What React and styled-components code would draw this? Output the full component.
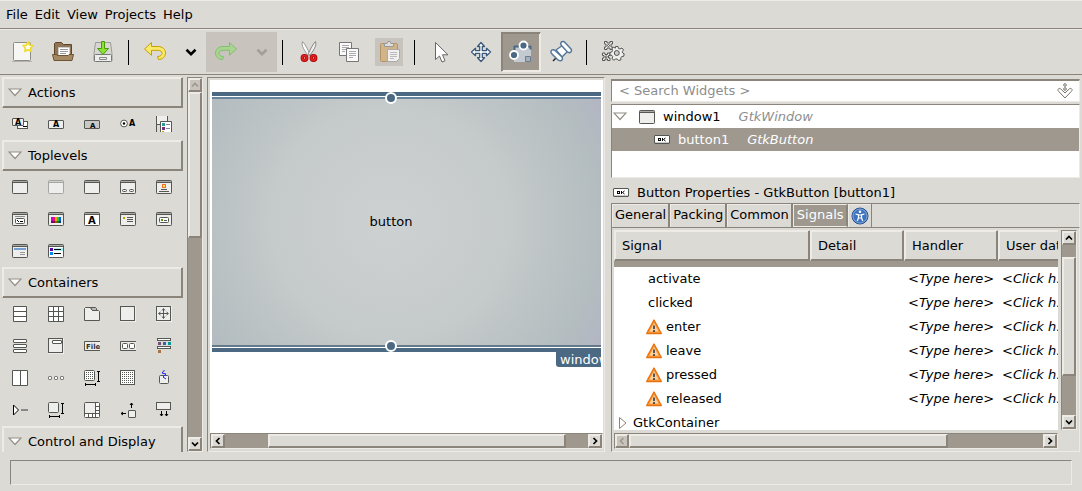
import React from 'react';
import styled, { createGlobalStyle, css } from 'styled-components';

const c = {
  bg: '#dcdad5',
  dark: '#8a847a',
  light: '#eeebe7',
  trough: '#9e988f',
  off: '#c8c4bd',
  blue: '#4b6983',
};

const sunken = css`
  border: 1px solid;
  border-color: ${c.dark} ${c.light} ${c.light} ${c.dark};
`;
const raised = css`
  border: 1px solid;
  border-color: ${c.light} ${c.dark} ${c.dark} ${c.light};
  box-shadow: inset -1px -1px 0 ${c.dark}, inset 1px 1px 0 ${c.light};
`;

const Global = createGlobalStyle`
  *, *::before, *::after { box-sizing: border-box; }
  body { margin: 0; background: ${c.bg}; }
  body, button, input { font: 13px/16px "DejaVu Sans", sans-serif; color: #000; }
  button { padding: 0; border: 0; background: none; text-align: left; }
  svg { display: block; flex: none; }
`;

const Shell = styled.div`
  display: flex;
  flex-direction: column;
  height: 100vh;
  overflow: hidden;
`;
const MenuBar = styled.nav`
  display: flex;
  flex: none;
  gap: 7px;
  height: 29px;
  padding: 0 6px;
  border-top: 1px solid ${c.light};
  border-bottom: 1px solid ${c.dark};
`;
const MenuItem = styled.button`
  height: 27px;
`;
const Toolbar = styled.div`
  display: flex;
  flex: none;
  align-items: center;
  height: 46px;
  padding: 0 3px;
  border-top: 1px solid ${c.light};
  border-bottom: 1px solid ${c.dark};
`;
const Tool = styled.button`
  display: flex;
  align-items: center;
  justify-content: center;
  width: ${(p) => (p.$narrow ? 31 : 40)}px;
  height: 40px;
  background: ${(p) => (p.$active ? c.trough : p.disabled && !p.$inset ? c.off : 'transparent')};
  ${(p) => p.$active && css`
    ${sunken}
    box-shadow: inset 1px 1px 0 ${c.dark}, inset -1px -1px 0 ${c.light};
  `}
`;
const InsetShade = styled.span`
  display: flex;
  padding: 2px;
  background: ${c.off};
`;
const Separator = styled.span`
  width: 1px;
  height: 25px;
  margin: 0 6px 0 5px;
  background: #000;
`;
const Main = styled.main`
  display: flex;
  flex: 1;
  min-height: 0;
  padding: 2px 2px 0;
`;

const PaletteArea = styled.aside`
  display: flex;
  flex: none;
  gap: 4px;
  width: 201px;
  margin-right: 4px;
`;
const Palette = styled.div`
  flex: 1;
  overflow: hidden;
`;
const GroupHeader = styled.button`
  display: flex;
  align-items: center;
  gap: 6px;
  width: 100%;
  height: 31px;
  padding: 0 5px;
  ${raised}
`;
const IconGrid = styled.div`
  display: grid;
  grid-template-columns: repeat(5, 36px);
  grid-auto-rows: 32px;
`;
const PaletteItem = styled.button`
  display: flex;
  align-items: center;
  justify-content: center;
`;

const Bar = styled.div`
  display: flex;
  flex: none;
  flex-direction: ${(p) => (p.$vertical ? 'column' : 'row')};
  ${(p) => (p.$vertical ? 'width' : 'height')}: 16px;
  background: ${c.trough};
  ${sunken}
`;
const Arrow = styled.button`
  display: flex;
  flex: none;
  align-items: center;
  justify-content: center;
  width: 14px;
  height: 14px;
  background: ${(p) => (p.disabled ? c.off : c.bg)};
  ${raised}
`;
const Before = styled.span`
  flex: ${(p) => p.$part} 1 0;
`;
const Thumb = styled.span`
  flex: ${(p) => p.$part} 1 0;
  background: ${c.bg};
  ${raised}
`;

const Designer = styled.section`
  display: flex;
  flex-direction: column;
  flex: 398 1 398px;
  min-width: 0;
  margin-right: 6px;
  padding: 2px 1px 2px 2px;
  ${sunken}
`;
const Canvas = styled.div`
  flex: 1;
  min-height: 0;
  padding: 12px 2px;
  background: #fff;
`;
const Clip = styled.div`
  position: relative;
  height: 100%;
  overflow: hidden;
`;
const DesignWindow = styled.div`
  position: relative;
  padding: 1px 0;
  border: solid ${c.blue};
  border-width: 4px 0;
`;
const DesignButton = styled.button`
  display: block;
  width: 100%;
  height: 250px;
  border-top: 2px solid #68839c;
  border-bottom: 2px solid #64798a;
  background: radial-gradient(ellipse 68% 104% at 46% 50%, #cdd1d1 0%, #c5caca 45%, #b4bdc0 78%, #b2b6c2 92%);
  text-align: center;
  padding-right: 31px;
`;
const Handle = styled.span`
  position: absolute;
  left: 46%;
  ${(p) => p.$edge}: -4px;
  width: 12px;
  height: 12px;
  margin-left: -6px;
  border: 2px solid #fff;
  border-radius: 50%;
  background: ${c.blue};
`;
const WindowTag = styled.span`
  display: block;
  width: 60px;
  height: 15px;
  margin: 0 -15px 0 auto;
  padding-left: 4px;
  border-radius: 0 0 0 3px;
  background: ${c.blue};
  color: #fff;
`;

const Inspector = styled.section`
  display: flex;
  flex-direction: column;
  flex: 469 1 469px;
  min-width: 0;
`;
const SearchBox = styled.label`
  display: flex;
  flex: none;
  align-items: center;
  height: 23px;
  margin: 2px 0;
  padding: 0 6px 0 7px;
  background: #fff;
  ${sunken}
  border-top-width: 2px;
`;
const SearchInput = styled.input`
  flex: 1;
  min-width: 0;
  padding: 0;
  border: 0;
  outline: 0;
  background: none;
  &::placeholder { color: #8e8e8e; opacity: 1; }
`;
const Tree = styled.div`
  flex: none;
  height: 74px;
  background: #fff;
  ${sunken}
`;
const TreeRow = styled.div`
  display: flex;
  align-items: center;
  gap: 8px;
  height: 23px;
  padding-left: ${(p) => (p.$selected ? 42 : 1)}px;
  background: ${(p) => (p.$selected ? c.trough : 'none')};
  color: ${(p) => (p.$selected ? '#fff' : '#000')};
`;
const ClassName = styled.em`
  margin-left: 10px;
  color: ${(p) => (p.$selected ? '#fff' : '#8e8e8e')};
`;
const TreeToggle = styled.button`
  margin-right: 4px;
`;
const Title = styled.h2`
  display: flex;
  flex: none;
  align-items: center;
  gap: 8px;
  height: 25px;
  margin: 0;
  padding: 4px 2px 0;
  font: inherit;
`;
const Tabs = styled.div`
  display: flex;
  flex: none;
  height: 25px;
  border: 1px solid ${c.dark};
  border-right-color: ${c.light};
`;
const Tab = styled.button`
  height: 23px;
  padding: 0 2px 2px 3px;
  border-right: 2px solid ${c.dark};
  box-shadow: inset 0 1px 0 ${c.light}, inset 1px 0 0 ${c.light};
  ${(p) => p.$icon && css`
    padding-bottom: 0;
    border-right-width: 1px;
  `}
  ${(p) => p.$selected && css`
    border: 1px solid ${c.light};
    border-right: 2px solid ${c.dark};
    background: ${c.trough};
    color: #fff;
    box-shadow: none;
  `}
`;
const Page = styled.div`
  display: grid;
  flex: 1;
  grid-template: minmax(0, 1fr) 16px / minmax(0, 1fr) 16px;
  gap: 3px;
  min-height: 0;
  padding: 2px;
  ${sunken}
  border-top: 0;
`;
const TableClip = styled.div`
  overflow: hidden;
  background: #fff;
`;
const Table = styled.table`
  width: 100%;
  min-width: 478px;
  table-layout: fixed;
  border-collapse: separate;
  border-spacing: 0;
`;
const Head = styled.th`
  width: ${(p) => p.$w || 'auto'};
  height: 31px;
  padding: 0 7px;
  background: ${c.bg};
  font-weight: normal;
  text-align: left;
  ${raised}
`;
const PartialCell = styled.td`
  height: 6px;
  padding: 0;
  background: ${c.trough};
`;
const Cell = styled.td`
  height: 24px;
  padding: 0 0 0 4px;
  overflow: hidden;
  white-space: nowrap;
  font-style: ${(p) => (p.$hint ? 'italic' : 'normal')};
`;
const Signal = styled.span`
  display: flex;
  align-items: center;
  gap: 4px;
  padding-left: ${(p) => (p.$top ? 0 : p.$warn ? 28 : 30)}px;
`;
const Status = styled.footer`
  flex: none;
  height: 25px;
  margin: 8px 10px 6px;
  ${sunken}
`;

const Down = () => (
  <svg width="14" height="9" viewBox="0 0 14 9"><path d="M1 1h12L7 7.5z" fill="#fff" stroke="#968f86" strokeWidth="1.2" /></svg>
);
const chevrons = {
  up: 'M1 5.5 4 2.5l3 3', down: 'M1 2.5l3 3 3-3', left: 'M5.5 1l-3 3 3 3', right: 'M2.5 1l3 3-3 3',
};
const Chevron = ({ dir, color = '#000', size = 8 }) => (
  <svg width={size} height={size} viewBox="0 0 8 8"><path d={chevrons[dir]} fill="none" stroke={color} strokeWidth="1.7" /></svg>
);

function Scrollbar({ vertical, before, thumb, startOff }) {
  return (
    <Bar $vertical={vertical}>
      <Arrow disabled={startOff} aria-label="Scroll back"><Chevron dir={vertical ? 'up' : 'left'} color={startOff ? c.trough : '#000'} /></Arrow>
      <Before $part={before} />
      <Thumb $part={thumb} />
      <Before $part={100 - before - thumb} />
      <Arrow aria-label="Scroll forward"><Chevron dir={vertical ? 'down' : 'right'} /></Arrow>
    </Bar>
  );
}

/* 16px palette icons */
const S = ({ children, ...rest }) => (
  <svg width="16" height="16" viewBox="0 0 16 16" fill="none" stroke="#555753" {...rest}>{children}</svg>
);
const Win = ({ children, fill = '#eeeeec', faint }) => (
  <S stroke={faint ? '#a5a5a2' : '#555753'}>
    <rect x=".5" y="1.5" width="15" height="13" rx=".8" fill={fill} />
    <path d="M1 2.5h14" stroke={faint ? '#d0d0ce' : '#a9a9a6'} />
    <path d="M1 3.5h14" />
    {children}
  </S>
);
const Letter = ({ x, y, size = 8 }) => (
  <text x={x} y={y} fontSize={size} fontFamily="DejaVu Sans, sans-serif" fontWeight="bold" fill="#000" stroke="none">A</text>
);
const OkIcon = () => (
  <S><rect x=".5" y="3.5" width="15" height="8" rx=".5" fill="#fff" /><path d="M1 10.5h14" stroke="#ccc" />
    <rect x="4.500" y="6.500" width="2" height="2" stroke="#000" /><path d="M8.500 6v3M11.500 6l-2 1.500 2 1.500" stroke="#000" /></S>
);

const groups = [
  ['Actions', [
    ['Action group', <S><rect x="5.5" y="5.5" width="10" height="7" fill="#fff" /><path d="M11 10.500h4" stroke="#000" /><rect x=".5" y="2.500" width="11" height="7" rx=".5" fill="#eeeeec" /><Letter x="3" y="9" /></S>],
    ['Action', <S><rect x=".5" y="4.500" width="15" height="8" rx=".5" fill="#eeeeec" /><Letter x="5" y="11" /></S>],
    ['Toggle action', <S><rect x=".5" y="4.500" width="15" height="8" rx=".5" fill="#c8c8c6" /><Letter x="6" y="12" size={7} /></S>],
    ['Radio action', <S><circle cx="4" cy="7.500" r="3.400" fill="#fff" /><circle cx="4" cy="7.500" r="1.200" fill="#000" stroke="none" /><Letter x="9" y="10" /></S>],
    ['Recent action', <S><path d="M1 0h11v8H1z" fill="#eeeeec" stroke="none" /><path d="M.5 0v16M11.500 0v5M1 8.500h4" /><path d="M4.500 16V5.500h11V16" fill="#fff" /><path d="M10 8.500h4M10 12.500h4" stroke="#888" /><path d="M6 8.500h3" stroke="#2a9a9a" strokeWidth="3" /><path d="M6 12.500h3" stroke="#75307b" strokeWidth="3" /><path d="M6 15.500h2" stroke="#c4a000" /></S>],
  ]],
  ['Toplevels', [
    ['Window', <Win />],
    ['Offscreen window', <Win faint />],
    ['Application window', <Win />],
    ['Dialog', <Win><rect x="2.500" y="10.500" width="4" height="2" rx="1" /><rect x="9.500" y="10.500" width="4" height="2" rx="1" /></Win>],
    ['About dialog', <Win><rect x="6.500" y="5.500" width="3" height="3" fill="#fce94f" stroke="#f0702a" /><path d="M5 10.500h6M3 12.500h10" /></Win>],
    ['File chooser dialog', <Win><path d="M3 5.500h10" stroke="#888" /><rect x="3.500" y="7.500" width="9" height="5" rx="1" fill="#fff" /><path d="M5 9.500h1M6 10.500h1M8 10.500h3" stroke="#000" /></Win>],
    ['Color dialog', <Win><path d="M3 9h2" stroke="#c0c" strokeWidth="6" /><path d="M5 9h2" stroke="#e15" strokeWidth="6" /><path d="M7 9h2" stroke="#da0" strokeWidth="6" /><path d="M9 9h2" stroke="#1c5" strokeWidth="6" /><path d="M11 9h2" stroke="#15e" strokeWidth="6" /><path d="M3 11h10" stroke="#000" strokeOpacity=".4" strokeWidth="2" /></Win>],
    ['Font dialog', <Win fill="#fff"><Letter x="4" y="13" size={10} /></Win>],
    ['Message dialog', <Win><path d="M3 7h2" stroke="#c4a000" strokeWidth="2" /><path d="M7 6.500h6M7 8.500h6M7 10.500h6" /></Win>],
    ['Recent dialog', <Win><rect x="3.500" y="6.500" width="9" height="5" rx="1" fill="#fff" /><path d="M5 9h2" stroke="#4e9a06" strokeWidth="2" /><path d="M8 9.500h3" /></Win>],
    ['Assistant', <Win><path d="M2 6h12" stroke="#729fcf" strokeWidth="2" /><path d="M8 9.500h5M8 11.500h5" stroke="#999" /></Win>],
    ['Color selection', <Win fill="#fff"><path d="M6 6.500h9" stroke="#9ee" strokeWidth="2.500" /><path d="M6 6.500h7M6 10.500h7" stroke="#000" /><path d="M2 6.500h3" stroke="#50a" strokeWidth="3" /><path d="M2 10.500h3" stroke="#08e" strokeWidth="3" /></Win>],
  ]],
  ['Containers', [
    ['Box', <S><path d="M1.500.5h13v15h-13zM1.500 5.500h13M1.500 10.500h13" fill="#fff" /></S>],
    ['Grid', <S><path d="M.5.5h15v15H.5zM.5 5.500h15M.5 10.500h15M5.500.5v15M10.500.5v15" fill="#fff" /></S>],
    ['Notebook', <S><path d="M.5 2.500l1-1h5l2 3h6l1 1v9H.5z" fill="#eeeeec" /><path d="M6.500 1.500h5l1 1v2h-4z" fill="#bbb" /></S>],
    ['Frame', <S><rect x="1" y="1" width="15" height="15" stroke="#fff" /><rect x=".5" y=".5" width="14" height="14" fill="#eeeeec" /></S>],
    ['Aspect frame', <S><rect x="1" y="1" width="15" height="15" stroke="#fff" /><rect x=".5" y=".5" width="14" height="14" fill="#eeeeec" /><path d="M7.500 3v9M3 7.500h9M6 4.500l1.500-2 1.500 2M6 10.500l1.500 2 1.500-2M4.500 6l-2 1.500 2 1.500M10.500 6l2 1.500-2 1.500" /></S>],
    ['Menu bar', <S fill="#fff"><rect x="1.500" y="1.500" width="13" height="3" rx=".5" /><rect x="1.500" y="6.500" width="13" height="3" rx=".5" /><rect x="1.500" y="11.500" width="13" height="3" rx=".5" /></S>],
    ['Expander', <S><rect x="1" y="1" width="15" height="15" stroke="#fff" /><rect x=".5" y=".5" width="14" height="14" fill="#eeeeec" /><rect x="4.500" y="2.500" width="9" height="3" rx=".5" fill="#fff" /></S>],
    ['File menu', <S><path d="M16 3.500H.5v9H16" fill="#eeeeec" /><text x="2" y="10.500" fontSize="7" fontFamily="DejaVu Sans, sans-serif" fontWeight="bold" fill="#333" stroke="none">File</text></S>],
    ['Toolbar', <S><path d="M16 3.500H.5v9H16" fill="#eeeeec" /><rect x="2.500" y="5.500" width="5" height="5" rx="1" fill="#fff" /><rect x="9.500" y="5.500" width="5" height="5" rx="1" fill="#fff" /></S>],
    ['Tool palette', <S><rect x="1.500" y=".5" width="13" height="2" fill="#fff" /><rect x="1.500" y="8.500" width="13" height="2" fill="#fff" /><path d="M2 5.500h3" stroke="#75507b" strokeWidth="3" /><path d="M7 5.500h3" stroke="#3465a4" strokeWidth="3" /><path d="M12 5.500h3" stroke="#099" strokeWidth="3" /><path d="M2 13.500h3" stroke="#a87244" strokeWidth="3" /></S>],
    ['Paned', <S><path d="M.5.5h15v15H.5zM8.500.5v15" fill="#fff" /></S>],
    ['Button box', <S fill="#fff"><rect x=".5" y="6.500" width="3" height="3" rx="1" /><rect x="6.500" y="6.500" width="3" height="3" rx="1" /><rect x="12.500" y="6.500" width="3" height="3" rx="1" /></S>],
    ['Layout', <S><rect x=".5" y=".5" width="10" height="10" rx="1" fill="#fff" /><path d="M2 2.500h8M2 4.500h8M2 6.500h8M2 8.500h8" strokeDasharray="1 1" /><path d="M14.500 1v11M13 1.500h3M13 11.500h3M1 14.500h11M1.500 13v3M11.500 13v3" stroke="#000" /></S>],
    ['Fixed', <S><rect x=".5" y=".5" width="14" height="14" fill="#fff" /><path d="M2 2.500h12M2 4.500h12M2 6.500h12M2 8.500h12M2 10.500h12M2 12.500h12" strokeDasharray="1 1" /></S>],
    ['Event box', <S><rect x="3.500" y="5.500" width="9" height="8" rx="1" fill="#eeeeec" /><path d="M8.500 0L6 3l4 1-3 3 3 2" stroke="#22f" /></S>],
    ['Expander row', <S><path d="M1.500 3v10l5-5z" fill="#fff" stroke="#000" /><path d="M9 8h7" stroke="#888" strokeWidth="2" /></S>],
    ['Viewport', <S><rect x=".5" y=".5" width="10" height="10" rx="1" fill="#eeeeec" /><path d="M14.500 1v11M13 1.500h3M13 11.500h3M1 14.500h11M1.500 13v3M11.500 13v3" stroke="#000" /></S>],
    ['Scrolled window', <S><rect x=".5" y=".5" width="15" height="15" rx="1" fill="#fff" /><path d="M1 1h10v10H1z" fill="#eeeeec" stroke="none" /><path d="M11.500 1v14M1 11.500h14M12 4.500h3M12 8.500h3M4.500 12v3M8.500 12v3" /></S>],
    ['Alignment', <S><rect x="8.500" y="8.500" width="7" height="7" rx=".5" fill="#eeeeec" /><path d="M11.500 6V1M10 3l1.500-2 1.500 2M6 11.500H1M3 10l-2 1.500L3 13" stroke="#000" /></S>],
    ['Popover', <S><rect x=".5" y=".5" width="14" height="7" fill="#eeeeec" /><path d="M5.500 9v5M10.500 9v5M4 12l1.500 2L7 12M9 12l1.500 2 1.500-2" stroke="#000" /></S>],
  ]],
  ['Control and Display', []],
];

/* 24px toolbar icons */
const T = ({ children, ...rest }) => (
  <svg width="24" height="24" viewBox="0 0 24 24" fill="none" strokeLinejoin="round" {...rest}>{children}</svg>
);
const NewIcon = () => (
  <T><path d="M1 21.500h20" stroke="#b5b2ac" /><rect x="2.500" y="2.500" width="17" height="18" rx="1" fill="#f6f6f5" stroke="#8c8d89" />
    <path d="M17 2l1.600 3 3.300.5-2.300 2.500.4 3.300-3-1.500-3 1.500.4-3.300-2.300-2.500 3.300-.5z" fill="#fffef0" stroke="#f0dc28" strokeWidth="1.700" /></T>
);
const OpenIcon = () => (
  <T><path d="M3.500 17V3.500l1-1h6l2 2h8V17z" fill="#8f7455" stroke="#5d4526" /><path d="M7.500 7.500h11v8h-11z" fill="#fff" stroke="#ccc" /><path d="M9 9.500h8M9 11.500h8M9 13.500h6" stroke="#999" />
    <path d="M1.500 14.500H5l2 1h10l1-1h4.500l-1.500 6h-18z" fill="#a48963" stroke="#6d5536" /></T>
);
const SaveIcon = () => (
  <T><path d="M4.500 2.500h15l1.500 11v7.500H3v-7.500z" fill="#d6d7d3" stroke="#9a9c97" /><rect x="3.500" y="14.500" width="17" height="7" rx="1" fill="#eeeeec" stroke="#777" /><path d="M8.500 17.500h7v2h-7z" stroke="#888" />
    <path d="M10.500 1.500h3v7h4L12 14.500l-5.500-6h4z" fill="#8ae234" stroke="#4e9a06" /></T>
);
const Undo = ({ redo }) => (
  <T><g transform={redo ? 'translate(24) scale(-1 1)' : undefined}><path d="M1.500 9l7-6.500v4h6.500c4.300 0 7.500 2.700 7.500 6.500s-3.200 6.500-7 6.500l-1-3c3 0 4.500-1.500 4.500-3.200 0-1.800-1.500-3-4-3h-6.500v5z" fill={redo ? '#a8d490' : '#fbe96a'} stroke={redo ? '#84be74' : '#c4a000'} /></g></T>
);
const Cut = () => (
  <T><path d="M5.500 1.500c-1.500 4 2 9.500 6 14l1-2C10.500 9 8.500 4.500 5.500 1.500z" fill="#fff" stroke="#999" /><path d="M18.500 1.500c1.500 4-2 9.500-6 14l-1-2c2-4.500 4-9 7-12z" fill="#eee" stroke="#888" />
    <g stroke="#a40000" strokeWidth="3.200"><circle cx="7.500" cy="18" r="2.300" /><circle cx="16.500" cy="18" r="2.300" /></g>
    <g stroke="#e02020" strokeWidth="1.800"><circle cx="7.500" cy="18" r="2.300" /><circle cx="16.500" cy="18" r="2.300" /></g></T>
);
const Copy = () => (
  <T><rect x="2.500" y="2.500" width="12" height="13" fill="#fafafa" stroke="#777" /><path d="M5 5.500h7M5 7.500h7M5 9.500h7M5 11.500h3" stroke="#aaa" />
    <rect x="9.500" y="8.500" width="12" height="13" fill="#fafafa" stroke="#777" /><path d="M12 11.500h7M12 13.500h7M12 15.500h7M12 17.500h4" stroke="#aaa" /></T>
);
const Paste = () => (
  <T><rect x="3.500" y="3.500" width="17" height="18" rx="1" fill="#d2b48a" stroke="#b39467" /><path d="M7.500 6.500v-3h2.500l1-2h2l1 2h2.500v3z" fill="#ddd" stroke="#999" />
    <path d="M10.500 9.500h12v9l-3 3h-9z" fill="#f0f0ee" stroke="#aaa" /><path d="M13 12.500h7M13 14.500h7M13 16.500h7M13 18.500h4" stroke="#bbb" /></T>
);
const Pointer = () => (
  <T><path d="M6.500 2.500v17l4-3.500 2.500 6 3-1.200-2.500-6h5.500z" fill="#fff" stroke="#666" /></T>
);
const Move = () => (
  <T><path d="M12 2.500l3.500 4h-2.200v4.200h4.200V8.300l4 3.700-4 3.700v-2.400h-4.200v4.400h2.200L12 21.500l-3.500-3.800h2.200v-4.400H6.500v2.400l-4-3.700 4-3.700v2.400h4.200V6.500H8.500z" fill="#fff" stroke="#3a5a7c" strokeWidth="1.300" /></T>
);
const Drag = () => (
  <T><path d="M5 6h17v16H5z" fill="#c4cad2" /><path d="M5.500 10V6.500H10M19 6.500h2.500v3" stroke="#4b6983" strokeWidth="2" /><path d="M16.500 16.500h5v5h-5z" fill="#a7b0ba" stroke="#6b7d90" />
    <g fill={c.blue} stroke="#fff" strokeWidth="1.800"><circle cx="14.500" cy="5.500" r="4" /><circle cx="5" cy="15" r="4" /></g></T>
);
const Pin = () => (
  <T><path d="M4 21l5-5" stroke="#222" strokeWidth="1.500" /><g fill="#fff" stroke="#56789b" strokeWidth="1.500"><path d="M7 10l7-5 5 6-6 6z" /><path d="M12 2.500c1-1.500 3-1 4 0l6 6.500c1 1.500.5 3-1 3.500s-2 0-3-1l-5.500-6c-1-1-1.200-2-.5-3z" /><path d="M2 11c.8-1.500 3-1.500 4-.5l6.500 6c1.500 1.300 1 3.500-.3 4-1.500.5-2.700 0-3.700-1L3 14c-1-1-1.300-2-1-3z" /></g></T>
);
const Gears = () => (
  <T><g stroke="#555753" fill="#f0f0ee"><path d="M3.500 3.500v-2h2.500v1.500h3V1.500h2.500V4H10v3h1.500v2.500H9V8H6v1.500H3.500V7H5V4H3.500z" /><circle cx="7.500" cy="5.500" r="1" />
    <path d="M1.500 15v-2H4v1.500h2.500V13H9v2.500H7.500V18H9v2.500H6.500V19H4v1.500H1.500V18H3v-2.500H1.500z" /><circle cx="5.200" cy="16.800" r="1" />
    <path d="M14.500 6.500h2.500l.5 2 1.500.5 2-1 1.500 2-1.200 1.500.4 1.500 1.500.8-.5 2.500-2 .2-1 1.500.3 1.800-2.500.7-1.200-1.500h-1.800l-1.500 1.200-2-1.500.7-2-.7-1.200-2-.5v-2.500l2-.7.5-1.500-.7-1.800 2-1.300 1.500 1z" /><circle cx="15.800" cy="13" r="2.500" fill="#ccc" /></g></T>
);
const WarnIcon = () => (
  <svg width="16" height="16" viewBox="0 0 16 16"><path d="M8 1L15.300 14.500H.7z" fill="#fa9a3c" stroke="#e8720c" strokeWidth="1.400" strokeLinejoin="round" /><path d="M8 4L12.500 12.500h-9z" fill="#fdd2a2" /><path d="M7 6.500h2v3.500H7zM7 11h2v2H7z" fill="#555" /></svg>
);
const Access = () => (
  <svg width="18" height="18" viewBox="0 0 18 18"><circle cx="9" cy="9" r="8" fill="#3f74bd" stroke="#27508c" /><circle cx="9" cy="9" r="7" fill="none" stroke="#8fb4e0" strokeWidth=".8" />
    <circle cx="9" cy="4.800" r="1.300" fill="#fff" /><path d="M4.500 7l3 .8v3L6.300 14M13.500 7l-3 .8v3l1.200 3.200M7.500 8h3v3h-3z" fill="none" stroke="#fff" strokeWidth="1.200" /></svg>
);
const SearchIcon = () => (
  <S stroke="#77736b"><circle cx="8" cy="2" r="1.300" /><circle cx="8" cy="6" r="1.300" /><path d="M1 6.500c.5-1.300 2-1.300 2.800-.5L8 10l4.200-4c.8-.8 2.300-.8 2.800.5.2.8 0 1.200-.6 1.800L8 15 1.600 8.300C1 7.700.8 7.300 1 6.500z" /></S>
);

const tools = [
  ['New', <NewIcon />], ['Open', <OpenIcon />], ['Save', <SaveIcon />], null,
  ['Undo', <Undo />], ['Undo history', <Chevron dir="down" size={12} />, { $narrow: true }],
  ['Redo', <Undo redo />, { disabled: true }],
  ['Redo history', <Chevron dir="down" size={12} color="#a39e96" />, { $narrow: true, disabled: true }], null,
  ['Cut', <Cut />], ['Copy', <Copy />],
  ['Paste', <InsetShade><Paste /></InsetShade>, { disabled: true, $inset: true }], null,
  ['Select', <Pointer />], ['Drag and resize', <Move />], ['Edit margins', <Drag />, { $active: true }],
  ['Edit alignment', <Pin />], null,
  ['Preferences', <Gears />],
];
const signals = ['activate', 'clicked', 'enter', 'leave', 'pressed', 'released'];

export default function App() {
  return (
    <Shell>
      <Global />
      <MenuBar>{['File', 'Edit', 'View', 'Projects', 'Help'].map((m) => <MenuItem key={m}>{m}</MenuItem>)}</MenuBar>
      <Toolbar>
        {tools.map((t, i) => (t ? <Tool key={t[0]} aria-label={t[0]} {...t[2]}>{t[1]}</Tool> : <Separator key={i} />))}
      </Toolbar>
      <Main>
        <PaletteArea>
          <Palette>
            {groups.map(([name, items]) => (
              <React.Fragment key={name}>
                <GroupHeader><Down />{name}</GroupHeader>
                <IconGrid>
                  {items.map(([label, icon]) => <PaletteItem key={label} aria-label={label}>{icon}</PaletteItem>)}
                </IconGrid>
              </React.Fragment>
            ))}
          </Palette>
          <Scrollbar vertical before={0} thumb={42} startOff />
        </PaletteArea>
        <Designer>
          <Canvas>
            <Clip>
              <DesignWindow>
                <DesignButton>button</DesignButton>
                <Handle $edge="top" />
                <Handle $edge="bottom" />
              </DesignWindow>
              <WindowTag>window1</WindowTag>
            </Clip>
          </Canvas>
          <Scrollbar before={12} thumb={82} />
        </Designer>
        <Inspector>
          <SearchBox>
            <SearchInput aria-label="Search widgets" placeholder="< Search Widgets >" />
            <SearchIcon />
          </SearchBox>
          <Tree>
            <TreeRow><TreeToggle aria-label="Collapse window1"><Down /></TreeToggle><Win />window1<ClassName>GtkWindow</ClassName></TreeRow>
            <TreeRow $selected><OkIcon />button1<ClassName $selected>GtkButton</ClassName></TreeRow>
          </Tree>
          <Title><OkIcon />Button Properties - GtkButton [button1]</Title>
          <Tabs>
            <Tab>General</Tab><Tab>Packing</Tab><Tab>Common</Tab><Tab $selected>Signals</Tab>
            <Tab $icon aria-label="Accessibility"><Access /></Tab>
          </Tabs>
          <Page>
            <TableClip>
              <Table>
                <thead>
                  <tr><Head>Signal</Head><Head $w="94px">Detail</Head><Head $w="94px">Handler</Head><Head $w="94px">User data</Head></tr>
                </thead>
                <tbody>
                  <tr><PartialCell colSpan={4} /></tr>
                  {signals.map((s, i) => (
                    <tr key={s}>
                      <Cell><Signal $warn={i > 1}>{i > 1 && <WarnIcon />}{s}</Signal></Cell>
                      <Cell />
                      <Cell $hint>&lt;Type here&gt;</Cell>
                      <Cell $hint>&lt;Click h…</Cell>
                    </tr>
                  ))}
                  <tr>
                    <Cell colSpan={4}>
                      <Signal $top>
                        <svg width="11" height="14" viewBox="0 0 11 14"><path d="M1.500 1.500v11L8 7z" fill="#fff" stroke="#8a847a" /></svg>
                        GtkContainer
                      </Signal>
                    </Cell>
                  </tr>
                </tbody>
              </Table>
            </TableClip>
            <Scrollbar vertical before={7} thumb={70} />
            <Scrollbar before={0} thumb={77} startOff />
          </Page>
        </Inspector>
      </Main>
      <Status />
    </Shell>
  );
}
